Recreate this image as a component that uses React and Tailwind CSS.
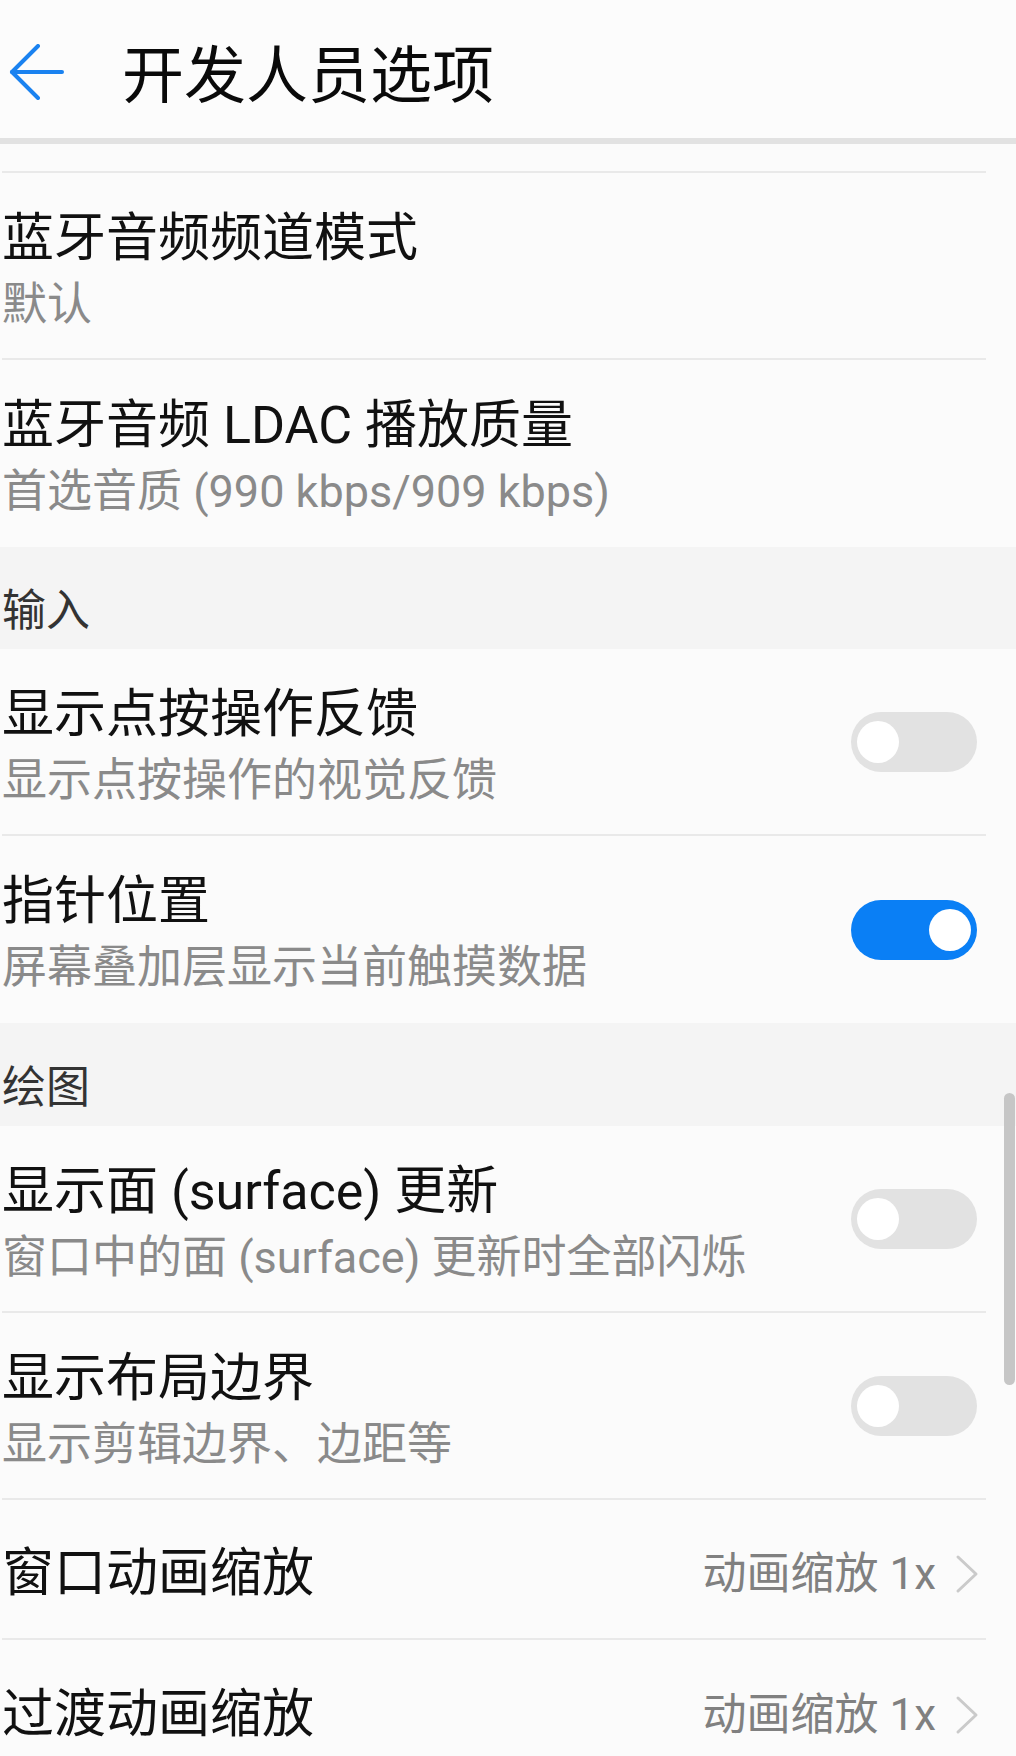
import React from "react";

const font = { fontFamily: 'Roboto, "Noto Sans CJK SC", sans-serif' };

const BackArrow = () => (
  <svg width="56" height="56" viewBox="0 0 56 56" fill="none" stroke="#1a82f0" strokeWidth="4" strokeLinecap="round" strokeLinejoin="round">
    <path d="M4 28 H54" />
    <path d="M30 2 L4 28 L30 54" />
  </svg>
);

const Chevron = () => (
  <svg width="24" height="40" viewBox="0 0 24 40" fill="none" stroke="#cacaca" strokeWidth="3" strokeLinecap="round" strokeLinejoin="round">
    <path d="M3 3 L21 20 L3 37" />
  </svg>
);

const Toggle = ({ on }) =>
  on ? (
    <div className="flex h-[60px] w-[126px] shrink-0 items-center justify-end rounded-full bg-[#0a7ff5] pr-[6px]">
      <div className="h-[42px] w-[42px] rounded-full bg-white" />
    </div>
  ) : (
    <div className="flex h-[60px] w-[126px] shrink-0 items-center rounded-full bg-[#e2e2e2] pl-[6px]">
      <div className="h-[42px] w-[42px] rounded-full bg-white" />
    </div>
  );

const TextRow = ({ title, sub, toggle, last }) => (
  <div className={`ml-[2px] flex h-[187px] w-[984px] ${last ? "" : "border-b-2 border-[#e9e9e9]"}`}>
    <div className="flex-1 pt-[33px]">
      <div className="text-[52px] leading-[66px] text-[#111]">{title}</div>
      <div className="text-[45px] leading-[66px] text-[#8a8a8a]">{sub}</div>
    </div>
    {toggle !== undefined && (
      <div className="flex items-center pr-[9px]">
        <Toggle on={toggle} />
      </div>
    )}
  </div>
);

const Section = ({ label, h }) => (
  <div className={`flex items-end bg-[#f4f4f4] pb-[16px] pl-[2px] ${h}`}>
    <span className="text-[44px] leading-[44px] text-[#333]">{label}</span>
  </div>
);

const ValueRow = ({ title, value, last }) => (
  <div className={`ml-[2px] flex h-[140px] w-[984px] items-center pt-[9px] pr-[7px] ${last ? "" : "border-b-2 border-[#e9e9e9]"}`}>
    <div className="flex-1 text-[52px] leading-[66px] text-[#111]">{title}</div>
    <div className="text-[44px] leading-[56px] text-[#808080]">{value}</div>
    <div className="ml-[19px] flex items-center">
      <Chevron />
    </div>
  </div>
);

export default function App() {
  return (
    <div className="relative h-[1756px] w-[1016px] overflow-hidden bg-[#fbfbfb]" style={font}>
      <header className="flex h-[144px] items-center border-b-[6px] border-[#e2e2e2] bg-[#fcfcfc] pt-[6px]">
        <div className="ml-[8px] flex items-center">
          <BackArrow />
        </div>
        <h1 className="ml-[58px] mt-[9px] text-[62px] font-normal leading-[80px] text-[#0a0a0a]">开发人员选项</h1>
      </header>

      <div className="ml-[2px] h-[29px] w-[984px] border-b-2 border-[#e9e9e9]" />

      <TextRow title="蓝牙音频频道模式" sub="默认" />
      <TextRow title="蓝牙音频 LDAC 播放质量" sub="首选音质 (990 kbps/909 kbps)" last />

      <Section label="输入" h="h-[102px]" />
      <TextRow title="显示点按操作反馈" sub="显示点按操作的视觉反馈" toggle={false} />
      <TextRow title="指针位置" sub="屏幕叠加层显示当前触摸数据" toggle={true} last />

      <Section label="绘图" h="h-[103px]" />
      <TextRow title="显示面 (surface) 更新" sub="窗口中的面 (surface) 更新时全部闪烁" toggle={false} />
      <TextRow title="显示布局边界" sub="显示剪辑边界、边距等" toggle={false} />

      <ValueRow title="窗口动画缩放" value="动画缩放 1x" />
      <ValueRow title="过渡动画缩放" value="动画缩放 1x" last />

      <div className="absolute right-[1px] top-[1093px] h-[292px] w-[11px] rounded-full bg-[#c6c6c6]" />
    </div>
  );
}
